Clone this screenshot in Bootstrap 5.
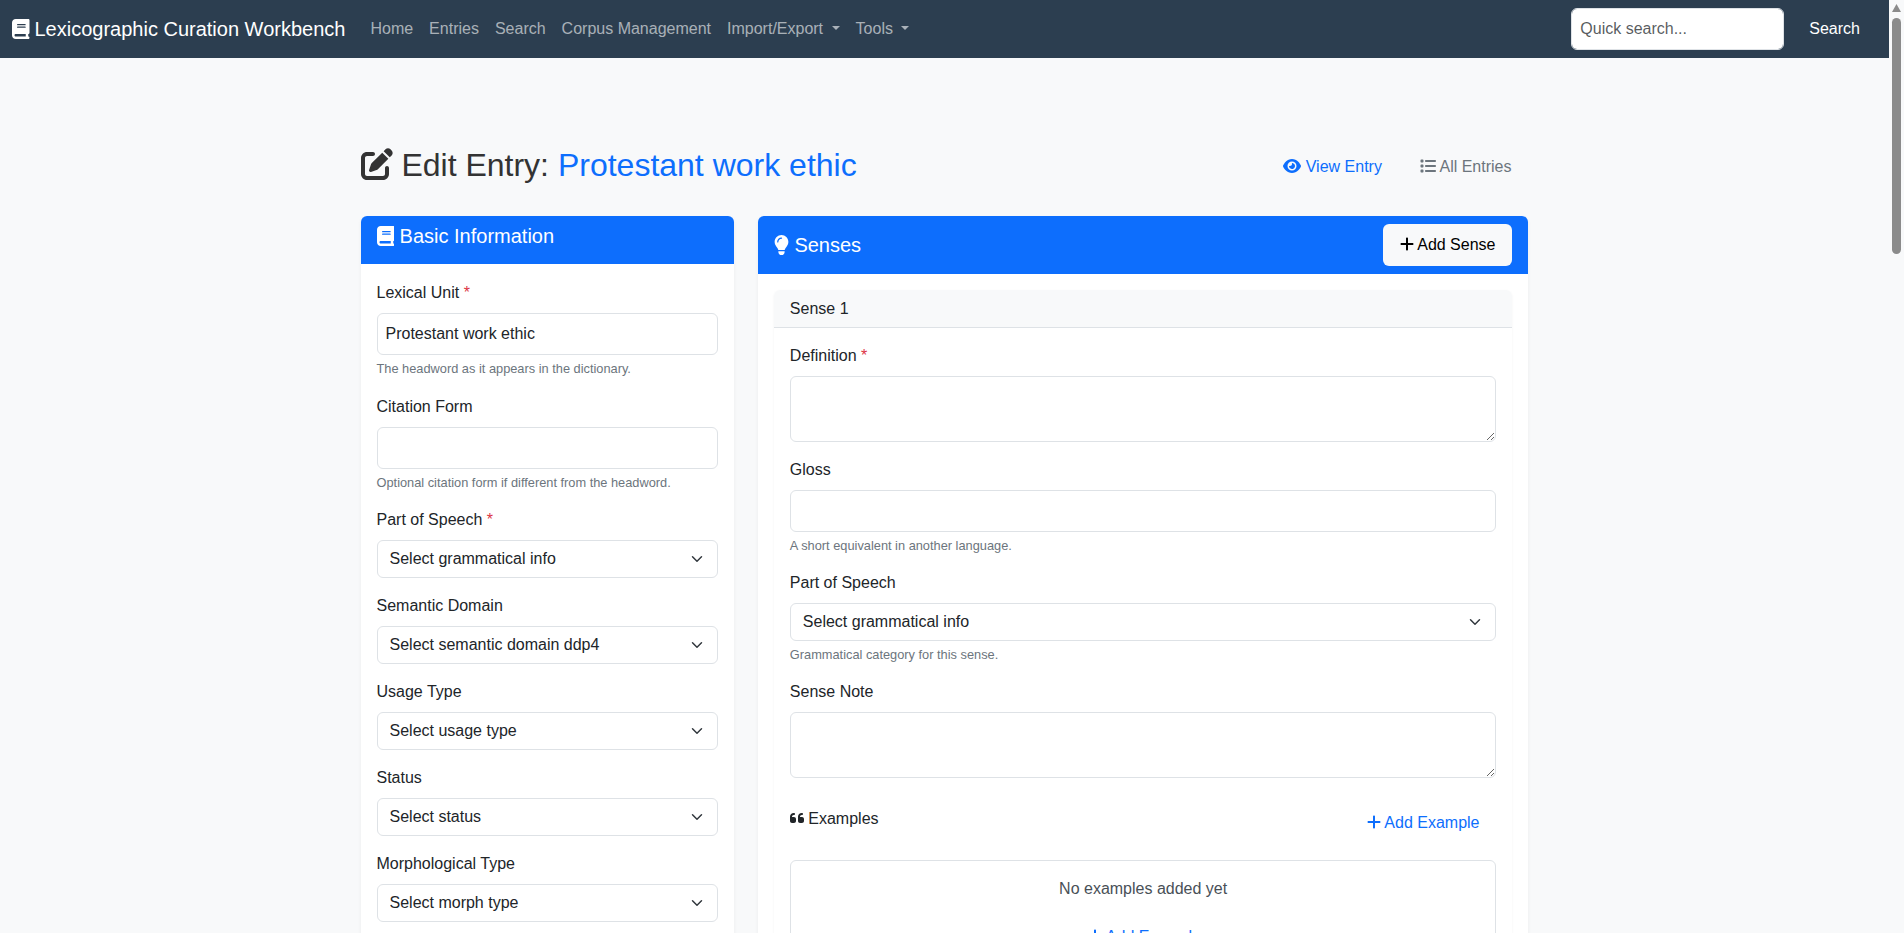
<!DOCTYPE html>
<html lang="en"><head><meta charset="utf-8"><title>Edit Entry</title>
<link href="https://cdn.jsdelivr.net/npm/bootstrap@5.3.0/dist/css/bootstrap.min.css" rel="stylesheet">
<style>
body{font-family:"Liberation Sans",Arial,sans-serif;background:#f8f9fa;color:#212529;min-height:3546px;margin-right:15px}
.wb-bar{position:fixed;top:0;right:0;bottom:0;width:15px;background:#f8f9fa;padding:4px 3px 0}
.wb-arrow{display:block;width:9px;height:8px;fill:#8b8b8b}
.wb-thumb{margin-top:6px;height:236px;background:#8b8b8b;border-radius:5px}
.wb-nav{background:#2c3e50;padding:8px 0}
.wb-nav .container-fluid{padding:0 12px}
.wb-nav .navbar-brand{font-size:20px;color:#fff;padding:0;margin-right:17px;gap:5px}
.wb-nav .nav-link{color:rgba(255,255,255,.6);padding:8px}
.wb-nav .form-control{width:213px;padding:8px;height:42px}
.wb-nav .btn{padding:8px 16px;color:#fff;border:1px solid transparent}
.wb-ico{fill:currentColor;height:1em;width:auto;vertical-align:-.125em}
.wb-main{max-width:1192px;margin:0 auto;padding:85px 12px 0}
.wb-title{font-size:32px;font-weight:400;color:#333;margin:0}
.wb-title span{color:#0d6efd}
.wb-top{margin-bottom:29px}
.wb-card{border:0;border-radius:6px;box-shadow:0 2px 4px rgba(0,0,0,.05)}
.wb-head{background:#0d6efd;color:#fff;border:0;border-radius:6px 6px 0 0!important}
.wb-head h5{font-size:20px;margin:0;font-weight:400;line-height:24px}
.wb-left{padding:8px 16px 16px}
.wb-left-b{padding-top:17px}
.wb-left-b>div:first-child{padding-bottom:1px}
.wb-head-r{padding:8px 16px;height:58px}
.wb-head-r .btn{background:#f8f9fa;color:#000;border:0;padding:8px 17px;height:42px}
.wb-sub{border-radius:6px;box-shadow:0 1px 3px rgba(0,0,0,.05)}
.wb-sub-h{background:#f8f9fa;padding:7px 16px 6px;border-bottom:1px solid #dee2e6;border-radius:6px 6px 0 0}
.wb-sub-h-t{font-size:16px;line-height:24px;margin:0}
.form-label{margin-bottom:8px}
.wb-in{height:42px;padding:8px}
textarea.wb-ta{height:66px;padding:8px}
.form-select{height:38px}
.wb-help{font-size:12.8px;line-height:19.2px;margin-top:4px;color:#6c757d}
.wb-req{color:#dc3545}
.wb-lnk{color:#0d6efd;padding:8px 17px 8px 16px;border:0;background:none}
.wb-exh{margin:25px 0 17px}
.wb-box{border:1px solid #dee2e6;border-radius:6px;padding:16px;text-align:center;color:#495057}
.wb-boxp{margin-bottom:24px}
.wb-act{color:#0d6efd;text-decoration:none;padding:8px 16px;border:0}
.wb-box .wb-act{padding-left:19px}
.wb-all{color:#6c757d;text-decoration:none;padding:8px 17px 8px 16px;border:0}
.wb-acts{gap:6px;padding-top:4px}
</style></head><body>
<nav class="navbar navbar-expand-lg wb-nav">
<div class="container-fluid">
<a class="navbar-brand d-flex align-items-center" href="#"><svg class="wb-ico" viewBox="0 0 448 512"><path d="M96 0C43 0 0 43 0 96V416c0 53 43 96 96 96H384h32c17.7 0 32-14.3 32-32s-14.3-32-32-32V384c17.7 0 32-14.3 32-32V32c0-17.7-14.3-32-32-32H384 96zm0 384H352v64H96c-17.7 0-32-14.3-32-32s14.3-32 32-32zm32-240c0-8.8 7.2-16 16-16H336c8.8 0 16 7.2 16 16s-7.2 16-16 16H144c-8.8 0-16-7.2-16-16zm16 48H336c8.8 0 16 7.2 16 16s-7.2 16-16 16H144c-8.8 0-16-7.2-16-16s7.2-16 16-16z"/></svg>Lexicographic Curation Workbench</a>
<ul class="navbar-nav me-auto">
<li class="nav-item"><a class="nav-link" href="#">Home</a></li>
<li class="nav-item"><a class="nav-link" href="#">Entries</a></li>
<li class="nav-item"><a class="nav-link" href="#">Search</a></li>
<li class="nav-item"><a class="nav-link" href="#">Corpus Management</a></li>
<li class="nav-item dropdown"><a class="nav-link dropdown-toggle" href="#">Import/Export </a></li>
<li class="nav-item dropdown"><a class="nav-link dropdown-toggle" href="#">Tools </a></li>
</ul>
<form class="d-flex gap-2"><input class="form-control" placeholder="Quick search..."><button class="btn" type="button">Search</button></form>
</div></nav>
<main class="wb-main">
<div class="d-flex justify-content-between align-items-center wb-top">
<h2 class="wb-title"><svg class="wb-ico" viewBox="0 0 512 512"><path d="M471.6 21.7c-21.9-21.9-57.3-21.9-79.2 0L362.3 51.7l97.9 97.9 30.1-30.1c21.9-21.9 21.9-57.3 0-79.2L471.6 21.7zm-299.2 220c-6.1 6.1-10.8 13.6-13.5 21.9l-29.6 88.8c-2.9 8.6-.6 18.1 5.8 24.6s15.9 8.7 24.6 5.8l88.8-29.6c8.2-2.7 15.7-7.4 21.9-13.5L437.7 172.3 339.7 74.3 172.4 241.7zM96 64C43 64 0 107 0 160V416c0 53 43 96 96 96H352c53 0 96-43 96-96V320c0-17.7-14.3-32-32-32s-32 14.3-32 32v96c0 17.7-14.3 32-32 32H96c-17.7 0-32-14.3-32-32V160c0-17.7 14.3-32 32-32h96c17.7 0 32-14.3 32-32s-14.3-32-32-32H96z"/></svg> Edit Entry: <span>Protestant work ethic</span></h2>
<div class="d-flex wb-acts">
<a class="btn wb-act" href="#"><svg class="wb-ico" viewBox="0 0 576 512"><path d="M288 32c-80.8 0-145.5 36.8-192.6 80.6C48.6 156 17.3 208 2.5 243.7c-3.3 7.9-3.3 16.7 0 24.6C17.3 304 48.6 356 95.4 399.4C142.5 443.2 207.2 480 288 480s145.5-36.8 192.6-80.6c46.8-43.5 78.1-95.4 93-131.1c3.3-7.9 3.3-16.7 0-24.6c-14.9-35.7-46.2-87.7-93-131.1C433.5 68.8 368.8 32 288 32zM144 256a144 144 0 1 1 288 0 144 144 0 1 1 -288 0zm144-64c0 35.3-28.7 64-64 64c-7.1 0-13.9-1.2-20.3-3.3c-5.5-1.8-11.9 1.6-11.7 7.4c.3 6.9 1.3 13.8 3.2 20.7c13.7 51.2 66.4 81.6 117.6 67.9s81.6-66.4 67.9-117.6c-11.1-41.5-47.8-69.4-88.6-71.1c-5.8-.2-9.2 6.1-7.4 11.7c2.1 6.4 3.3 13.2 3.3 20.3z"/></svg> View Entry</a>
<a class="btn wb-all" href="#"><svg class="wb-ico" viewBox="0 0 512 512"><path d="M40 48C26.7 48 16 58.7 16 72v48c0 13.3 10.7 24 24 24H88c13.3 0 24-10.7 24-24V72c0-13.3-10.7-24-24-24H40zM192 64c-17.7 0-32 14.3-32 32s14.3 32 32 32H480c17.7 0 32-14.3 32-32s-14.3-32-32-32H192zm0 160c-17.7 0-32 14.3-32 32s14.3 32 32 32H480c17.7 0 32-14.3 32-32s-14.3-32-32-32H192zm0 160c-17.7 0-32 14.3-32 32s14.3 32 32 32H480c17.7 0 32-14.3 32-32s-14.3-32-32-32H192zM16 232v48c0 13.3 10.7 24 24 24H88c13.3 0 24-10.7 24-24V232c0-13.3-10.7-24-24-24H40c-13.3 0-24 10.7-24 24zM40 368c-13.3 0-24 10.7-24 24v48c0 13.3 10.7 24 24 24H88c13.3 0 24-10.7 24-24V392c0-13.3-10.7-24-24-24H40z"/></svg> All Entries</a>
</div></div>
<div class="row">
<div class="col-4">
<div class="card wb-card">
<div class="card-header wb-head wb-left"><h5><svg class="wb-ico" viewBox="0 0 448 512"><path d="M96 0C43 0 0 43 0 96V416c0 53 43 96 96 96H384h32c17.7 0 32-14.3 32-32s-14.3-32-32-32V384c17.7 0 32-14.3 32-32V32c0-17.7-14.3-32-32-32H384 96zm0 384H352v64H96c-17.7 0-32-14.3-32-32s14.3-32 32-32zm32-240c0-8.8 7.2-16 16-16H336c8.8 0 16 7.2 16 16s-7.2 16-16 16H144c-8.8 0-16-7.2-16-16zm16 48H336c8.8 0 16 7.2 16 16s-7.2 16-16 16H144c-8.8 0-16-7.2-16-16s7.2-16 16-16z"/></svg> Basic Information</h5></div>
<div class="card-body wb-left-b">
<div class="mb-3"><label class="form-label">Lexical Unit <span class="wb-req">*</span></label><input class="form-control wb-in" value="Protestant work ethic"><div class="wb-help">The headword as it appears in the dictionary.</div></div>
<div class="mb-3"><label class="form-label">Citation Form</label><input class="form-control wb-in"><div class="wb-help">Optional citation form if different from the headword.</div></div>
<div class="mb-3"><label class="form-label">Part of Speech <span class="wb-req">*</span></label><select class="form-select"><option>Select grammatical info</option></select></div>
<div class="mb-3"><label class="form-label">Semantic Domain</label><select class="form-select"><option>Select semantic domain ddp4</option></select></div>
<div class="mb-3"><label class="form-label">Usage Type</label><select class="form-select"><option>Select usage type</option></select></div>
<div class="mb-3"><label class="form-label">Status</label><select class="form-select"><option>Select status</option></select></div>
<div class="mb-3"><label class="form-label">Morphological Type</label><select class="form-select"><option>Select morph type</option></select></div>
</div></div></div>
<div class="col-8">
<div class="card wb-card">
<div class="card-header wb-head wb-head-r d-flex justify-content-between align-items-center"><h5><svg class="wb-ico" viewBox="0 0 384 512"><path d="M272 384c9.6-31.9 29.5-59.1 49.2-86.2l0 0c5.2-7.1 10.4-14.2 15.4-21.4c19.8-28.5 31.4-63 31.4-100.3C368 78.8 289.2 0 192 0S16 78.8 16 176c0 37.3 11.6 71.9 31.4 100.3c5 7.2 10.2 14.3 15.4 21.4l0 0c19.8 27.1 39.7 54.4 49.2 86.2H272zM192 512c44.2 0 80-35.8 80-80V416H112v16c0 44.2 35.8 80 80 80zM112 176c0 8.8-7.2 16-16 16s-16-7.2-16-16c0-61.9 50.1-112 112-112c8.8 0 16 7.2 16 16s-7.2 16-16 16c-44.2 0-80 35.8-80 80z"/></svg> Senses</h5><button class="btn" type="button"><svg class="wb-ico" viewBox="0 0 448 512"><path d="M256 80c0-17.7-14.3-32-32-32s-32 14.3-32 32V224H48c-17.7 0-32 14.3-32 32s14.3 32 32 32H192V432c0 17.7 14.3 32 32 32s32-14.3 32-32V288H400c17.7 0 32-14.3 32-32s-14.3-32-32-32H256V80z"/></svg> Add Sense</button></div>
<div class="card-body">
<div class="wb-sub">
<div class="wb-sub-h"><p class="wb-sub-h-t">Sense 1</p></div>
<div class="card-body">
<div class="mb-3"><label class="form-label">Definition <span class="wb-req">*</span></label><textarea class="form-control wb-ta"></textarea></div>
<div class="mb-3"><label class="form-label">Gloss</label><input class="form-control wb-in"><div class="wb-help">A short equivalent in another language.</div></div>
<div class="mb-3"><label class="form-label">Part of Speech</label><select class="form-select"><option>Select grammatical info</option></select><div class="wb-help">Grammatical category for this sense.</div></div>
<div class="mb-3"><label class="form-label">Sense Note</label><textarea class="form-control wb-ta"></textarea></div>
<div class="d-flex justify-content-between align-items-start wb-exh">
<span class="pt-1"><svg class="wb-ico" viewBox="0 0 448 512"><path d="M0 216C0 149.7 53.7 96 120 96h8c17.7 0 32 14.3 32 32s-14.3 32-32 32h-8c-30.9 0-56 25.1-56 56v8h64c35.3 0 64 28.7 64 64v64c0 35.3-28.7 64-64 64H64c-35.3 0-64-28.7-64-64V320 288 216zm256 0c0-66.3 53.7-120 120-120h8c17.7 0 32 14.3 32 32s-14.3 32-32 32h-8c-30.9 0-56 25.1-56 56v8h64c35.3 0 64 28.7 64 64v64c0 35.3-28.7 64-64 64H320c-35.3 0-64-28.7-64-64V320 288 216z"/></svg> Examples</span>
<button class="btn wb-lnk" type="button"><svg class="wb-ico" viewBox="0 0 448 512"><path d="M256 80c0-17.7-14.3-32-32-32s-32 14.3-32 32V224H48c-17.7 0-32 14.3-32 32s14.3 32 32 32H192V432c0 17.7 14.3 32 32 32s32-14.3 32-32V288H400c17.7 0 32-14.3 32-32s-14.3-32-32-32H256V80z"/></svg> Add Example</button>
</div>
<div class="wb-box"><p class="wb-boxp">No examples added yet</p><a class="wb-act" href="#"><svg class="wb-ico" viewBox="0 0 448 512"><path d="M256 80c0-17.7-14.3-32-32-32s-32 14.3-32 32V224H48c-17.7 0-32 14.3-32 32s14.3 32 32 32H192V432c0 17.7 14.3 32 32 32s32-14.3 32-32V288H400c17.7 0 32-14.3 32-32s-14.3-32-32-32H256V80z"/></svg> Add Example</a></div>
</div></div></div></div></div></div>
</main>
<div class="wb-bar" aria-hidden="true"><svg class="wb-arrow" viewBox="0 0 9 8"><path d="M4.5 0 9 8H0z"/></svg><div class="wb-thumb"></div></div>
<script src="https://cdn.jsdelivr.net/npm/bootstrap@5.3.0/dist/js/bootstrap.bundle.min.js"></script>
</body></html>
